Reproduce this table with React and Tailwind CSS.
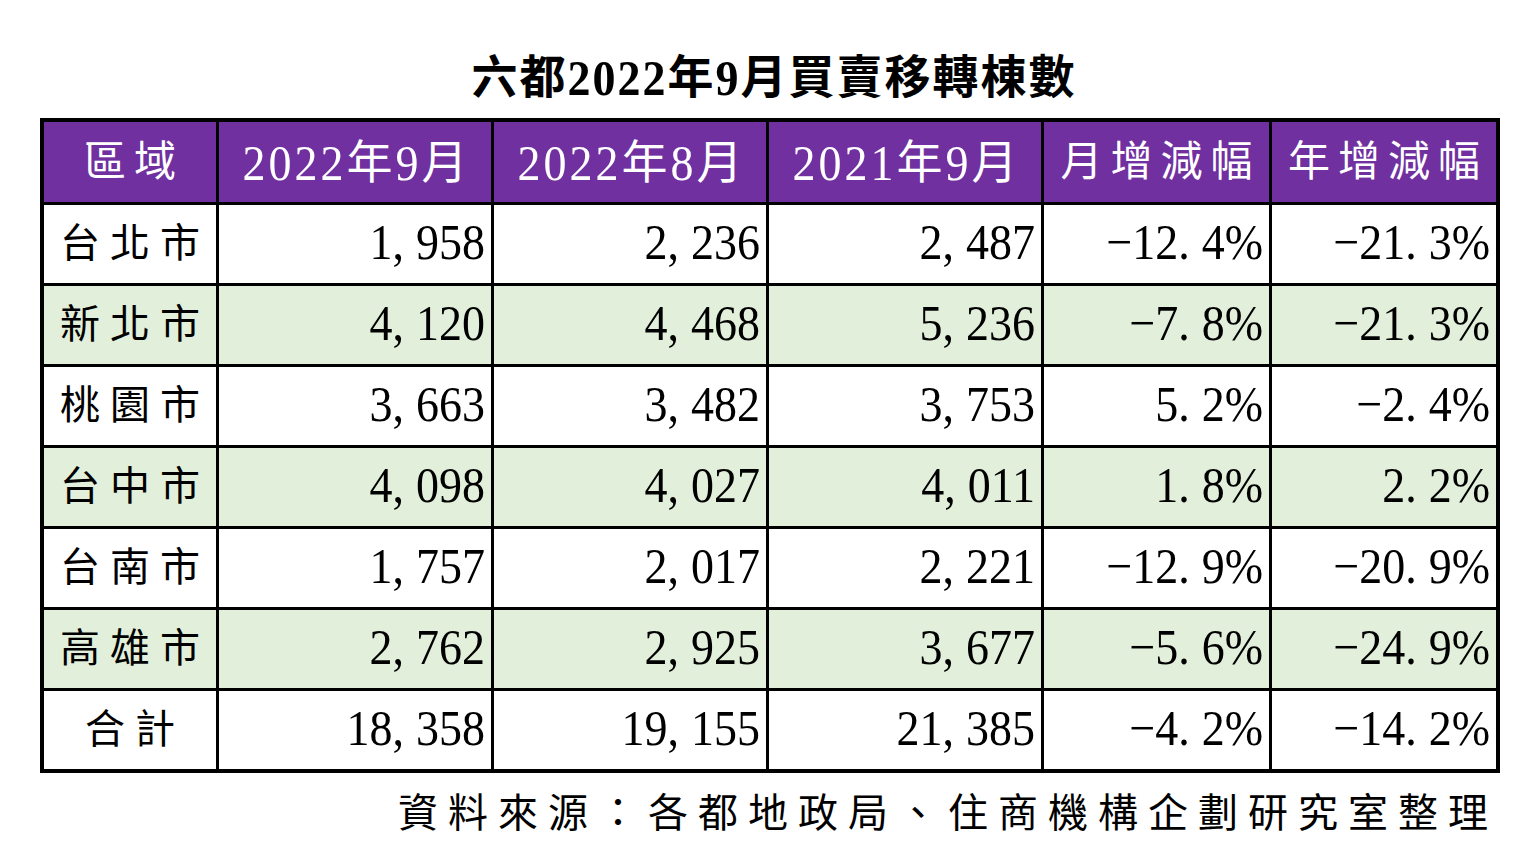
const header = ["區域", "2022年9月", "2022年8月", "2021年9月", "月增減幅", "年增減幅"];

const rows = [
  ["台北市", "1,958", "2,236", "2,487", "-12.4%", "-21.3%"],
  ["新北市", "4,120", "4,468", "5,236", "-7.8%", "-21.3%"],
  ["桃園市", "3,663", "3,482", "3,753", "5.2%", "-2.4%"],
  ["台中市", "4,098", "4,027", "4,011", "1.8%", "2.2%"],
  ["台南市", "1,757", "2,017", "2,221", "-12.9%", "-20.9%"],
  ["高雄市", "2,762", "2,925", "3,677", "-5.6%", "-24.9%"],
  ["合計", "18,358", "19,155", "21,385", "-4.2%", "-14.2%"],
];

const font = "font-['Liberation_Serif','Noto_Sans_CJK_TC',serif]";

// 數字跟中文混排時，數字另外包一層才會用襯線字
function Mixed({ text }) {
  return text.split(/(\d+)/).map((p, i) =>
    /^\d+$/.test(p) ? (
      <span key={i} className="font-['Liberation_Serif',serif] inline-block scale-y-110">{p}</span>
    ) : (
      <span key={i}>{p}</span>
    )
  );
}

// 原表的字型逗號、小數點後面會空一格
function Num({ value }) {
  const parts = value.split(/([,.])/);
  return (
    <span className="inline-block scale-y-110">
      {parts.map((p, i) =>
        p === "," || p === "." ? (
          <span key={i} className="mr-[12px]">{p}</span>
        ) : (
          <span key={i}>{p.replace("-", "\u2212")}</span>
        )
      )}
    </span>
  );
}

export default function App() {
  return (
    <div className={`w-[1536px] h-[863px] bg-white ${font} text-black`}>
      <div className="pl-[40px] pt-[54px] w-[1500px]">
        <h1 className="h-[48px] leading-[48px] text-center text-[46px] tracking-[2px] font-bold mb-[16px] pl-[8px]">
          <Mixed text="六都2022年9月買賣移轉棟數" />
        </h1>

        <div className="grid grid-cols-[172px_272px_272px_272px_225px_224px] grid-rows-[80px_repeat(7,78px)] gap-[3px] bg-black p-[4px]">
          {header.map((h, i) => (
            <div
              key={h}
              className={`bg-[#7030a0] text-white flex items-center justify-center ${
                i === 0 || i >= 4
                  ? "text-[42px] tracking-[8px] pl-[8px]"
                  : "text-[46px] tracking-[3px] pl-[3px]"
              }`}
            >
              <Mixed text={h} />
            </div>
          ))}

          {rows.map((r, ri) =>
            r.map((c, ci) => (
              <div
                key={ri + "-" + ci}
                className={`${ri % 2 === 1 ? "bg-[#e2efda]" : "bg-white"} flex items-center ${
                  ci === 0
                    ? "justify-center text-[40px] tracking-[10px] pl-[10px]"
                    : "justify-end pr-[6px] text-[46px] pb-[6px]"
                }`}
              >
                {ci === 0 ? c : <Num value={c} />}
              </div>
            ))
          )}
        </div>

        <p className="mt-[20px] text-right text-[40px] leading-[42px] tracking-[10px] pr-[2px]">
          資料來源：各都地政局、住商機構企劃研究室整理
        </p>
      </div>
    </div>
  );
}
